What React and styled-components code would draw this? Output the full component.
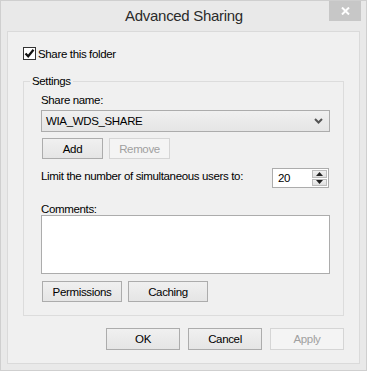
import React from 'react';
import styled, { createGlobalStyle } from 'styled-components';

const GlobalStyle = createGlobalStyle`
  html, body {
    margin: 0;
    padding: 0;
    background: #e9e9e9;
  }
  * {
    box-sizing: border-box;
  }
`;

export default function App() {
  return (
    <>
      <GlobalStyle />
      <Frame>
        <TitleBar>
          <span />
          <Title>Advanced Sharing</Title>
          <CloseButton>
            <svg width="9" height="8" viewBox="0 0 9 8">
              <path d="M1 0.5 L8 7.5 M8 0.5 L1 7.5" stroke="#fff" strokeWidth="2" />
            </svg>
          </CloseButton>
        </TitleBar>
        <Client>
          <CheckRow>
            <CheckBox>
              <svg width="11" height="11" viewBox="0 0 11 11">
                <path d="M1.5 5.5 L4.2 8.3 L9.5 1.8" fill="none" stroke="#111" strokeWidth="2.2" />
              </svg>
            </CheckBox>
            <Label>Share this folder</Label>
          </CheckRow>
          <Group>
            <Legend>Settings</Legend>
            <FieldLabel $top={4}>Share name:</FieldLabel>
            <Combo>
              <span>WIA_WDS_SHARE</span>
              <svg width="9" height="6" viewBox="0 0 9 6">
                <path d="M1 1 L4.5 4.5 L8 1" fill="none" stroke="#555" strokeWidth="2" />
              </svg>
            </Combo>
            <ButtonRow $top={6}>
              <Button $w={61}>Add</Button>
              <Button $w={61} disabled>Remove</Button>
            </ButtonRow>
            <LimitRow>
              <Label>Limit the number of simultaneous users to:</Label>
              <Spinner>
                <SpinValue>20</SpinValue>
                <SpinButtons>
                  <SpinArrow>
                    <svg width="7" height="4" viewBox="0 0 7 4"><path d="M0 4 L3.5 0 L7 4 Z" fill="#222" /></svg>
                  </SpinArrow>
                  <SpinArrow>
                    <svg width="7" height="4" viewBox="0 0 7 4"><path d="M0 0 L3.5 4 L7 0 Z" fill="#222" /></svg>
                  </SpinArrow>
                </SpinButtons>
              </Spinner>
            </LimitRow>
            <FieldLabel $top={14} $bottom={-1}>Comments:</FieldLabel>
            <Comments />
            <ButtonRow $top={7}>
              <Button $w={80}>Permissions</Button>
              <Button $w={80}>Caching</Button>
            </ButtonRow>
          </Group>
          <Footer>
            <Button $w={74} $h={22}>OK</Button>
            <Button $w={74} $h={22}>Cancel</Button>
            <Button $w={74} $h={22} disabled>Apply</Button>
          </Footer>
        </Client>
      </Frame>
    </>
  );
}

const Frame = styled.div`
  width: 367px;
  height: 371px;
  display: flex;
  flex-direction: column;
  padding: 0 6px 6px 6px;
  background: #e9e9e9;
  border: 1px solid #cfcfcf;
  font-family: 'Liberation Sans', Arial, sans-serif;
  font-size: 11.5px;
  letter-spacing: -0.35px;
  color: #000;
`;

const TitleBar = styled.div`
  height: 30px;
  display: grid;
  grid-template-columns: 1fr auto 1fr;
  align-items: start;
  margin-right: -1px;
`;

const Title = styled.div`
  font-size: 15px;
  letter-spacing: -0.3px;
  line-height: 30px;
  color: #2b2b2b;
`;

const CloseButton = styled.div`
  justify-self: end;
  width: 32px;
  height: 20px;
  background: #c7c7c7;
  display: flex;
  align-items: center;
  justify-content: center;
`;

const Client = styled.div`
  flex: 1;
  display: flex;
  flex-direction: column;
  background: #f0f0f0;
  border: 1px solid #dadada;
  padding: 15px 15px 12px 15px;
`;

const CheckRow = styled.div`
  display: flex;
  align-items: center;
  height: 13px;
  gap: 2px;
`;

const CheckBox = styled.div`
  width: 13px;
  height: 13px;
  border: 1px solid #333;
  background: #fff;
  display: flex;
  align-items: center;
  justify-content: center;
`;

const Label = styled.span`
  line-height: 16px;
  white-space: nowrap;
`;

const Group = styled.fieldset`
  margin: 13px 0 0 0;
  padding: 0 13px 13px 17px;
  border: 1px solid #dcdcdc;
  min-width: 0;
`;

const Legend = styled.legend`
  margin-left: -11px;
  padding: 0 2px;
  line-height: 16px;
`;

const FieldLabel = styled.div`
  line-height: 14px;
  margin-top: ${p => p.$top}px;
  margin-bottom: ${p => p.$bottom || 3}px;
`;

const Combo = styled.div`
  height: 22px;
  display: flex;
  align-items: center;
  justify-content: space-between;
  padding: 0 6px 0 4px;
  border: 1px solid #acacac;
  background: linear-gradient(#f0f0f0, #e5e5e5);
`;

const ButtonRow = styled.div`
  display: flex;
  gap: 6px;
  margin-top: ${p => p.$top}px;
  padding-left: 1px;
`;

const Button = styled.button`
  width: ${p => p.$w}px;
  height: ${p => p.$h || 21}px;
  padding: 0;
  font: inherit;
  letter-spacing: inherit;
  color: #000;
  border: 1px solid #acacac;
  background: linear-gradient(#f0f0f0, #e5e5e5);
  &:disabled {
    color: #a0a0a0;
    border-color: #d5d5d5;
    background: #f4f4f4;
  }
`;

const LimitRow = styled.div`
  display: flex;
  align-items: flex-start;
  justify-content: space-between;
  margin-top: 9px;
  height: 20px;
`;

const Spinner = styled.div`
  width: 57px;
  height: 20px;
  display: flex;
  border: 1px solid #acacac;
  background: #fff;
  margin-right: 1px;
`;

const SpinValue = styled.div`
  flex: 1;
  padding-left: 5px;
  line-height: 18px;
`;

const SpinButtons = styled.div`
  width: 16px;
  display: flex;
  flex-direction: column;
  gap: 1px;
  padding: 1px 1px 1px 0;
`;

const SpinArrow = styled.div`
  flex: 1;
  display: flex;
  align-items: center;
  justify-content: center;
  background: linear-gradient(#f0f0f0, #e0e0e0);
  border: 1px solid #bcbcbc;
`;

const Comments = styled.div`
  height: 59px;
  background: #fff;
  border: 1px solid #acacac;
`;

const Footer = styled.div`
  display: flex;
  justify-content: flex-end;
  gap: 8px;
  margin-top: 12px;
`;
